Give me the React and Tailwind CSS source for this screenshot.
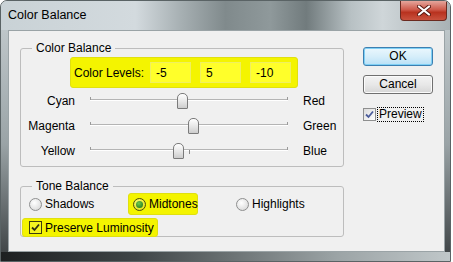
import React from "react";

const sliders = [
  { left: "Cyan", right: "Red", pos: 87 },
  { left: "Magenta", right: "Green", pos: 98 },
  { left: "Yellow", right: "Blue", pos: 83, tick: true },
];

function SliderRow({ left, right, pos, tick }) {
  return (
    <div className="flex h-[25px] items-center">
      <span className="w-[54px] text-right">{left}</span>
      <div className="relative ml-[15px] h-[16px] w-[198px]">
        <div className="absolute left-0 right-0 top-[6px] h-[2px] border-t border-t-[#b4b4b4] border-b border-b-white" />
        <div className="absolute left-0 top-[4px] h-[3px] w-[1px] bg-[#9a9a9a]" />
        <div className="absolute right-0 top-[4px] h-[3px] w-[1px] bg-[#9a9a9a]" />
        {tick && <div className="absolute left-[99px] top-[7px] h-[4px] w-[1px] bg-[#8a8a8a]" />}
        <div
          className="absolute top-0 h-[16px] w-[11px] rounded-t-[5px] rounded-b-[1px] border border-[#7b7b7b] bg-[linear-gradient(to_bottom,#ffffff,#e6e6e6_55%,#cdcdcd)]"
          style={{ left: pos }}
        />
      </div>
      <span className="ml-[15px]">{right}</span>
    </div>
  );
}

function Radio({ checked, marked }) {
  return (
    <span
      className={`flex h-[13px] w-[13px] shrink-0 items-center justify-center rounded-full border ${
        marked
          ? "border-[#4a4a10] bg-[radial-gradient(circle_at_40%_35%,#ffff80,#d8d800)]"
          : "border-[#8e8f8f] bg-[radial-gradient(circle_at_40%_35%,#ffffff,#d2d2d2)]"
      }`}
    >
      {checked && (
        <span className="h-[7px] w-[7px] rounded-full bg-[radial-gradient(circle_at_40%_35%,#6ccb4c,#1b6d14)]" />
      )}
    </span>
  );
}

function Check({ marked }) {
  return (
    <span
      className={`flex h-[13px] w-[13px] shrink-0 items-center justify-center border ${
        marked
          ? "border-[#3d3d10] bg-[#f4f420]"
          : "border-[#8e8f8f] bg-[linear-gradient(135deg,#dcdcdc,#ffffff)]"
      }`}
    >
      <svg width="9" height="9" viewBox="0 0 9 9">
        <path
          d="M1 4.5 L3.5 7 L8 1.5"
          fill="none"
          stroke={marked ? "#2f2f10" : "#4c5d9c"}
          strokeWidth="1.8"
        />
      </svg>
    </span>
  );
}

export default function App() {
  return (
    <div className="h-[262px] w-[453px] bg-white font-['Liberation_Sans',Arial,sans-serif] text-[12px] text-black">
      <div className="flex h-[262px] w-[451px] flex-col overflow-hidden rounded-t-[7px] border border-[#5a6365] bg-[linear-gradient(to_bottom,#c7cfd2,#9aa3a6_55%,#3a3f41)]">
        {/* title bar */}
        <div className="flex h-[29px] items-start bg-[linear-gradient(to_right,#c9d2d6_0%,#d3dade_30%,#a7b0b3_40%,#808a8c_50%,#8f999b_60%,#717b7d_68%,#b8c1c4_78%,#cfd6d9_85%,#a9b2b5_100%)]">
          <span className="pl-[7px] pt-[7px] text-[12.5px] leading-[15px]">Color Balance</span>
          <div className="ml-auto mr-[3px] flex h-[20px] w-[47px] items-center justify-center rounded-b-[4px] border border-t-0 border-[#6a2a20] bg-[linear-gradient(to_bottom,#e5a69c,#cf5b4c_45%,#b8321f_60%,#c9523e)]">
            <svg width="14" height="11" viewBox="0 0 14 11">
              <path d="M2 1.5 L12 9.5 M12 1.5 L2 9.5" stroke="#5a1a12" strokeWidth="4" strokeLinecap="round" />
              <path d="M2 1.5 L12 9.5 M12 1.5 L2 9.5" stroke="#ffffff" strokeWidth="2.2" strokeLinecap="round" />
            </svg>
          </div>
        </div>

        {/* client area */}
        <div className="flex flex-1 flex-col pl-[7px] pr-[5px]">
          <div className="flex flex-1 border border-[#9aa3a6] bg-[#f0f0f0] pl-[11px] pt-[10px]">
            <div className="flex w-[324px] flex-col">
              <fieldset className="rounded-[3px] border border-[#bdbdbd] pb-[3px]">
                <legend className="ml-[11px] px-[4px] leading-[14px]">Color Balance</legend>
                <div className="ml-[49px] mt-[2px] flex h-[31px] w-[228px] items-center rounded-[3px] border border-[#e0e010] bg-[#f4f400] pl-[3px]">
                  <span className="w-[76px] shrink-0">Color Levels:</span>
                  <div className="flex gap-[9px]">
                    {["-5", "5", "-10"].map((v) => (
                      <input
                        key={v}
                        readOnly
                        value={v}
                        className="h-[21px] w-[41px] border border-[#f0f060] bg-[#ffff2a] pl-[5px] text-[12px] outline-none"
                      />
                    ))}
                  </div>
                </div>
                {sliders.map((s) => (
                  <SliderRow key={s.left} {...s} />
                ))}
              </fieldset>

              <fieldset className="mt-[12px] rounded-[3px] border border-[#bdbdbd]">
                <legend className="ml-[11px] px-[4px] leading-[14px]">Tone Balance</legend>
                <div className="flex h-[22px] items-center">
                  <div className="flex w-[107px] items-center gap-[3px] pl-[8px]">
                    <Radio />
                    <span>Shadows</span>
                  </div>
                  <div className="flex h-[22px] w-[70px] items-center gap-[3px] rounded-[3px] border border-[#e0e010] bg-[#f4f400] pl-[4px]">
                    <Radio checked marked />
                    <span>Midtones</span>
                  </div>
                  <div className="ml-[38px] flex items-center gap-[3px]">
                    <Radio />
                    <span>Highlights</span>
                  </div>
                </div>
                <div className="relative -mb-[1px] ml-[1px] mt-[3px] flex h-[19px] w-[136px] items-center gap-[3px] rounded-[3px] border border-[#e0e010] bg-[#f4f400] pl-[6px]">
                  <Check marked />
                  <span>Preserve Luminosity</span>
                </div>
              </fieldset>
            </div>

            <div className="ml-[19px] mt-[6px] flex w-[70px] flex-col">
              <button className="h-[19px] rounded-[3px] border border-[#3c7fb1] bg-[linear-gradient(to_bottom,#ebf7fd,#d6eefa_50%,#b9e1f7)] shadow-[inset_0_0_0_1px_#7fd0f5] leading-[17px]">
                OK
              </button>
              <button className="mt-[9px] h-[19px] rounded-[3px] border border-[#707070] bg-[linear-gradient(to_bottom,#f3f3f3,#e8e8e8_50%,#d6d6d6)] shadow-[inset_0_0_0_1px_#fbfbfb] leading-[17px]">
                Cancel
              </button>
              <div className="mt-[13px] flex items-center gap-[1px]">
                <Check />
                <span className="border border-dotted border-black px-[1px] leading-[13px]">Preview</span>
              </div>
            </div>
          </div>
          <div className="-ml-[7px] -mr-[5px] h-[9px] bg-[linear-gradient(to_right,#1d2021,#3f4547_30%,#9ca4a6_75%,#c0c7c9)]" />
        </div>
      </div>
    </div>
  );
}
